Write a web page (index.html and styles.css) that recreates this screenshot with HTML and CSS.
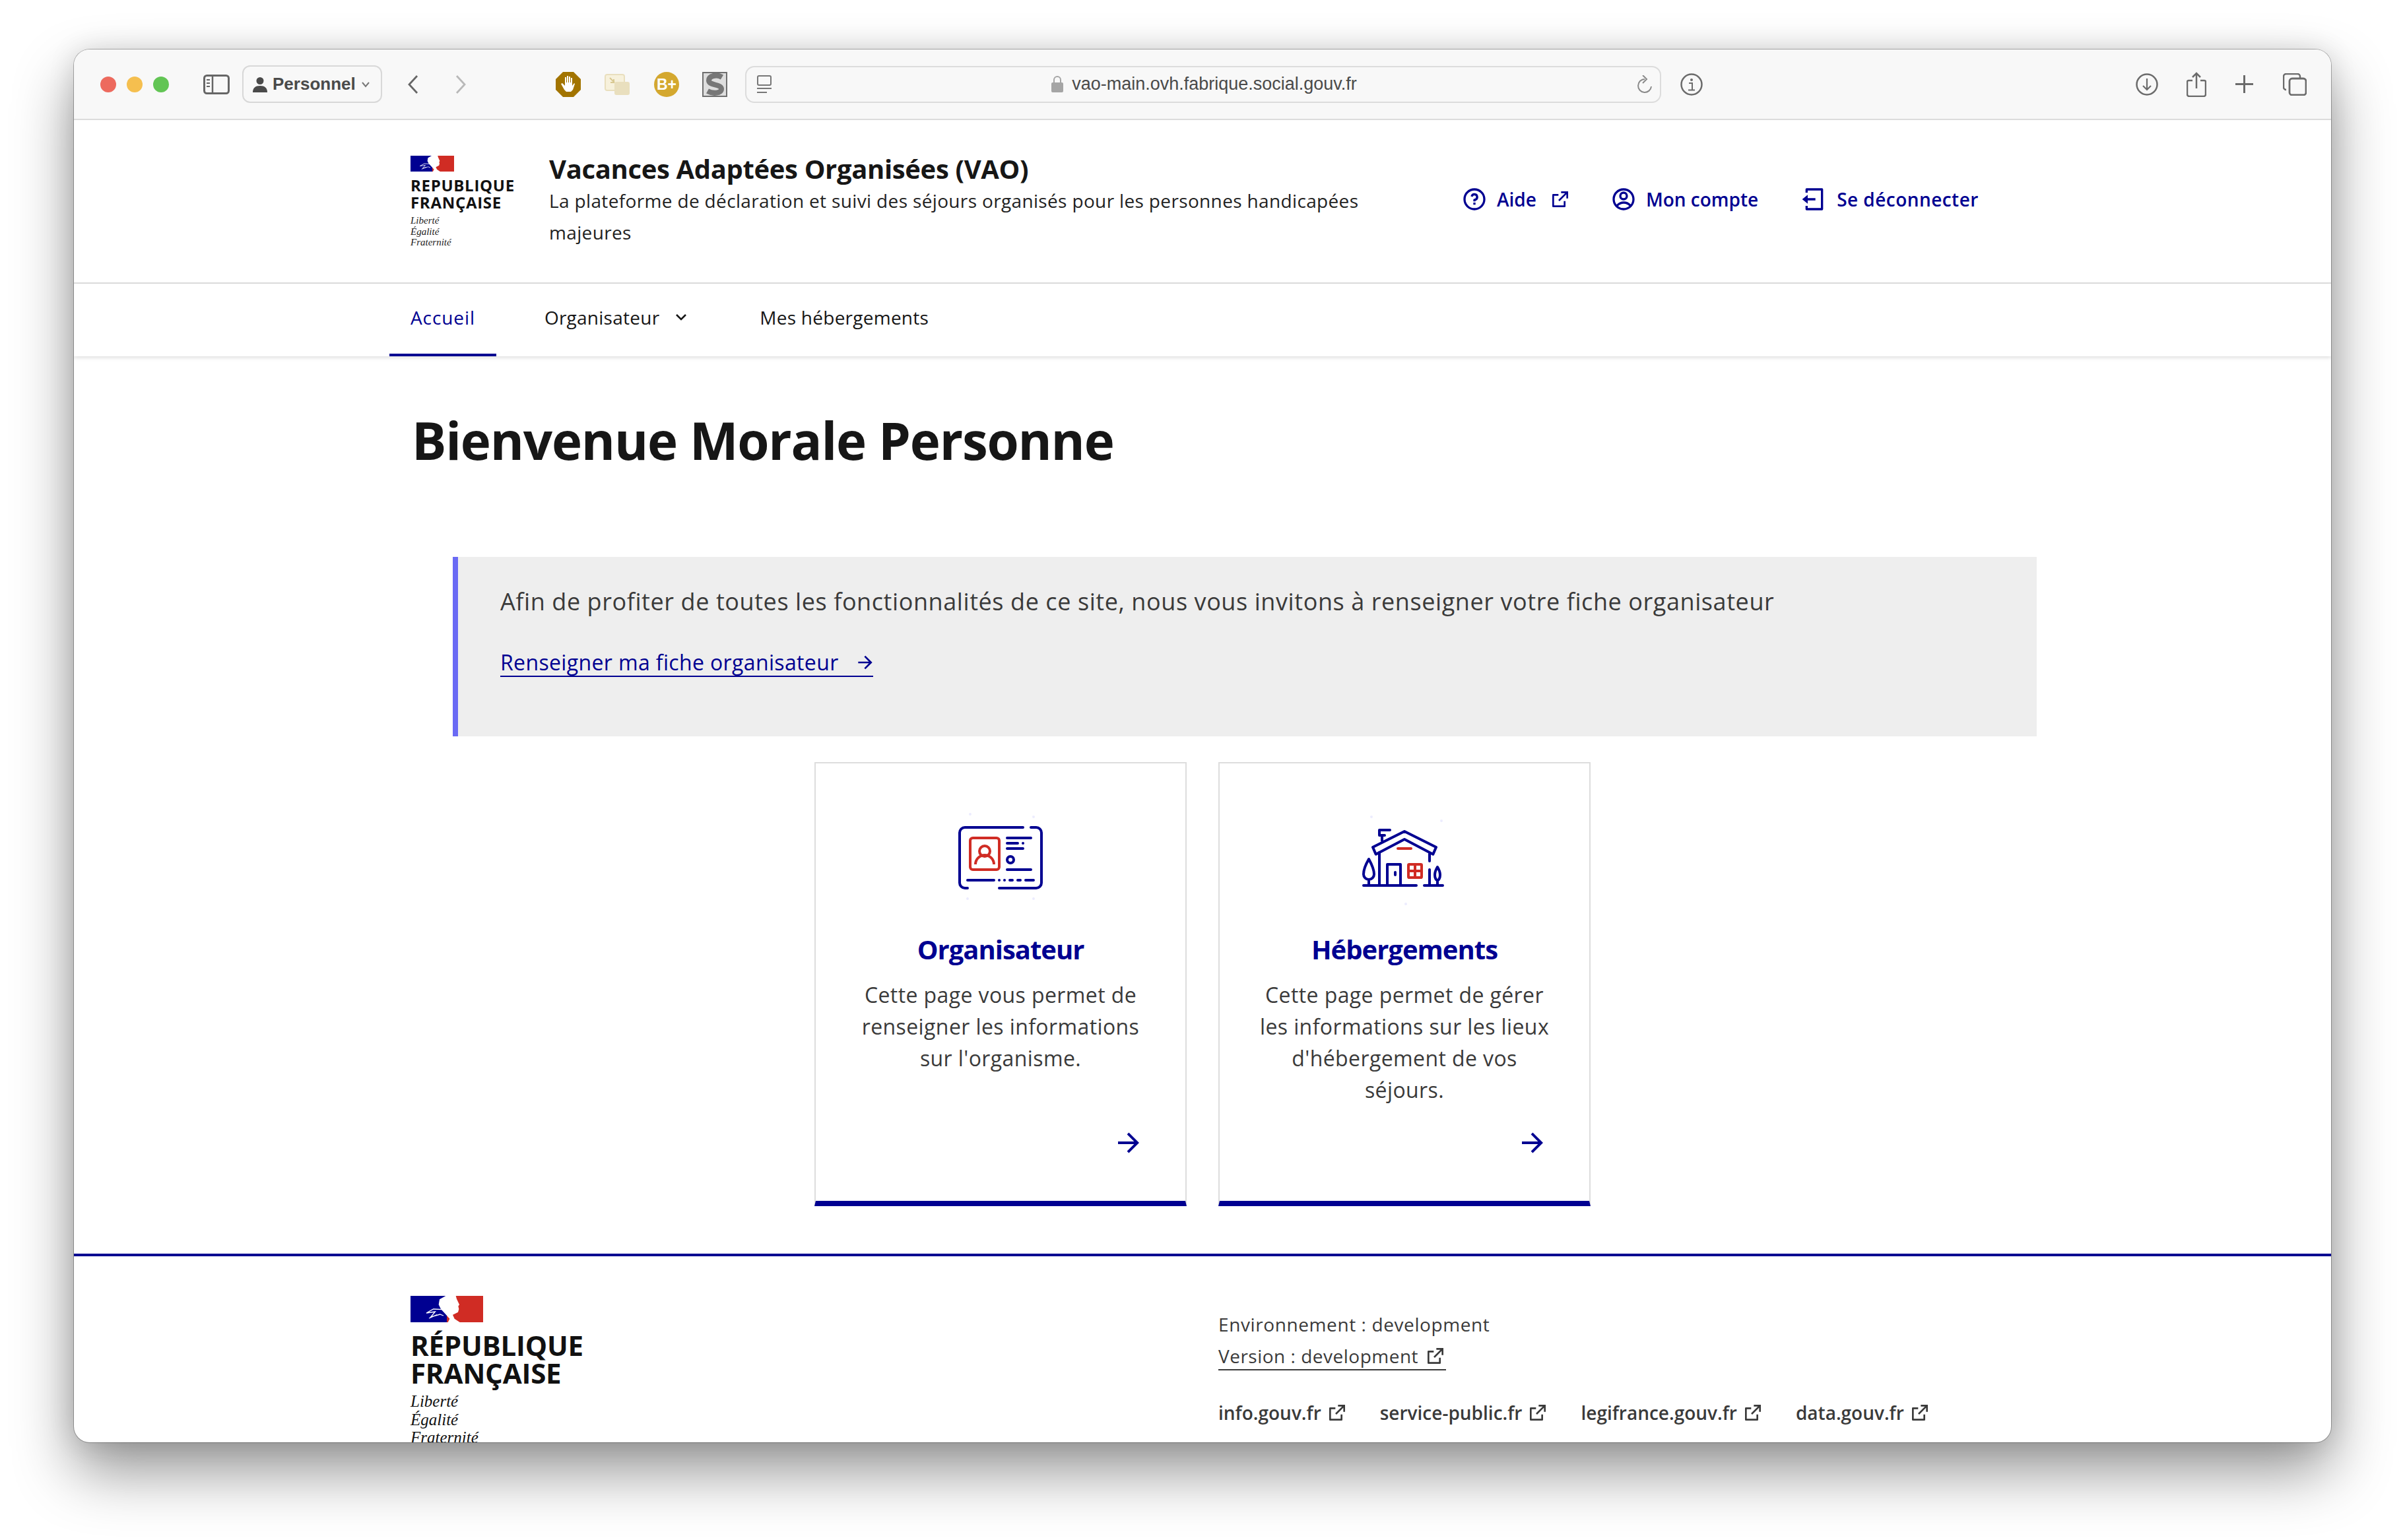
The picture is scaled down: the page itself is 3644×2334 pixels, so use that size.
FILE: index.html
```html
<!DOCTYPE html>
<html lang="fr">
<head>
<meta charset="utf-8">
<title>Vacances Adaptées Organisées (VAO)</title>
<link rel="stylesheet" href="styles.css">
</head>
<body>
<svg class="defs" width="0" height="0" aria-hidden="true">
  <symbol id="ext" viewBox="0 0 24 24"><path d="M10 6v2H5v11h11v-5h2v6a1 1 0 0 1-1 1H4a1 1 0 0 1-1-1V7a1 1 0 0 1 1-1h6zm11-3v8h-2V6.413l-7.793 7.794-1.414-1.414L17.585 5H13V3h8z"/></symbol>
  <symbol id="arrow" viewBox="0 0 24 24"><path d="M16.172 11l-5.364-5.364 1.414-1.414L20 12l-7.778 7.778-1.414-1.414L16.172 13H4v-2z"/></symbol>
  <symbol id="flag" viewBox="0 0 330 120">
    <rect width="330" height="120" fill="#000091"/>
    <rect x="165" width="165" height="120" fill="#d02c24"/>
    <path fill="#fff" d="M160 0H206L210 14 222 40 217 47 220 60 216 74 192 86 200 104 224 120H170L178 104 160 84 138 60 128 40 132 16Z"/>
    <path fill="none" stroke="#fff" stroke-width="4" d="M146 62 104 60 72 78 112 72 92 96 134 84 150 90M120 86 84 102"/>
  </symbol>
</svg>

<div class="window">
  <div class="toolbar">
    <span class="light red"></span><span class="light yellow"></span><span class="light green"></span>
    <svg class="tb sidebar" width="40" height="30" viewBox="0 0 40 30"><rect x="1.5" y="1.5" width="37" height="27" rx="4" fill="none" stroke="#666" stroke-width="3"/><path d="M14 1v28" stroke="#666" stroke-width="2.5"/><path d="M5 8h5M5 13h5M5 18h5" stroke="#666" stroke-width="2"/></svg>
    <div class="profile">
      <svg width="22" height="24" viewBox="0 0 22 24"><circle cx="11" cy="6.500" r="5.500" fill="#4a4a4a"/><path d="M0 24c0-7 4-10 11-10s11 3 11 10z" fill="#4a4a4a"/></svg>
      <span>Personnel</span>
      <svg width="14" height="10" viewBox="0 0 14 10"><path d="M2 2l5 6 5-6" fill="none" stroke="#777" stroke-width="2"/></svg>
    </div>
    <svg class="tb back" width="18" height="30" viewBox="0 0 18 30"><path d="M15 2 3 15l12 13" fill="none" stroke="#666" stroke-width="2.800"/></svg>
    <svg class="tb forward" width="18" height="30" viewBox="0 0 18 30"><path d="M3 2l12 13L3 28" fill="none" stroke="#b9b9b9" stroke-width="2.800"/></svg>
    <svg class="tb ext1" width="38" height="38" viewBox="0 0 38 38"><path d="M11 0h16l11 11v16L27 38H11L0 27V11z" fill="#a27400"/><path d="M13 27 8 18l2-1 4 4V8h2v8h1V6h2v10h1V7h2v9h1V9h2v12l3-4 1 1-3 9-3 3h-7z" fill="#fff"/></svg>
    <svg class="tb ext2" width="38" height="32" viewBox="0 0 38 32"><rect x="1" y="1" width="29" height="24" rx="3" fill="#f7f1dc" stroke="#e9dfbe" stroke-width="2"/><rect x="15" y="12" width="23" height="20" rx="3" fill="#e9dfbe"/><path d="M8 6l7 7M14 8v5H9" fill="none" stroke="#d9c992" stroke-width="2"/></svg>
    <div class="ext3">B+</div>
    <svg class="tb ext4" width="38" height="38" viewBox="0 0 38 38"><rect width="38" height="38" fill="#6f6f6f"/><rect x="2" y="2" width="34" height="34" fill="#dedede"/><path d="M30 8C22 3 10 6 10 13c0 8 19 5 19 13 0 6-12 8-21 3" fill="none" stroke="#777" stroke-width="8"/></svg>
    <div class="urlbar">
      <svg class="reader" width="22" height="28" viewBox="0 0 22 28"><rect x="1" y="1" width="20" height="14" rx="2" fill="none" stroke="#777" stroke-width="2"/><path d="M0 20h22M0 26h15" stroke="#777" stroke-width="2"/></svg>
      <div class="url">
        <svg width="18" height="25" viewBox="0 0 18 25"><rect y="10" width="18" height="15" rx="2" fill="#a5a5a5"/><path d="M4 11V6a5 5 0 0 1 10 0v5" fill="none" stroke="#a5a5a5" stroke-width="2"/></svg>
        <span>vao-main.ovh.fabrique.social.gouv.fr</span>
      </div>
      <svg class="reload" width="23" height="28" viewBox="0 0 23 28"><path d="M12 6a10 10 0 1 0 10 11" fill="none" stroke="#8a8a8a" stroke-width="2"/><path d="M9 0l6 6-6 6" fill="none" stroke="#8a8a8a" stroke-width="2"/></svg>
    </div>
    <svg class="tb info" width="34" height="34" viewBox="0 0 34 34"><circle cx="17" cy="17" r="15.500" fill="none" stroke="#6b6b6b" stroke-width="2.500"/><circle cx="17" cy="10" r="2" fill="#6b6b6b"/><path d="M13 15h5v10M12 25.500h10" fill="none" stroke="#6b6b6b" stroke-width="2"/></svg>
    <svg class="tb download" width="34" height="34" viewBox="0 0 34 34"><circle cx="17" cy="17" r="15.500" fill="none" stroke="#6b6b6b" stroke-width="2.500"/><path d="M17 8v17M11 19l6 6 6-6" fill="none" stroke="#6b6b6b" stroke-width="2.200"/></svg>
    <svg class="tb share" width="30" height="38" viewBox="0 0 30 38"><path d="M9 13H3a2 2 0 0 0-2 2v19a3 3 0 0 0 3 3h22a3 3 0 0 0 3-3V15a2 2 0 0 0-2-2h-6" fill="none" stroke="#6b6b6b" stroke-width="2.500"/><path d="M15 2v23M9 8l6-6 6 6" fill="none" stroke="#6b6b6b" stroke-width="2.500"/></svg>
    <svg class="tb plus" width="27" height="27" viewBox="0 0 27 27"><path d="M13.500 0v27M0 13.500h27" stroke="#6b6b6b" stroke-width="3"/></svg>
    <svg class="tb tabs" width="36" height="34" viewBox="0 0 36 34"><rect x="10" y="8" width="25" height="25" rx="4" fill="none" stroke="#6b6b6b" stroke-width="2.800"/><path d="M5 25a4 4 0 0 1-4-4V5a4 4 0 0 1 4-4h17a4 4 0 0 1 4 4v3" fill="none" stroke="#6b6b6b" stroke-width="2.500"/></svg>
  </div>

  <header class="header">
    <div class="logo">
      <svg class="logo-flag"><use href="#flag"/></svg>
      <div class="logo-name">REPUBLIQUE<br>FRANÇAISE</div>
      <div class="logo-motto">Liberté<br>Égalité<br>Fraternité</div>
    </div>
    <div class="service">
      <div class="service-title">Vacances Adaptées Organisées (VAO)</div>
      <p class="service-sub">La plateforme de déclaration et suivi des séjours organisés pour les personnes handicapées majeures</p>
    </div>
    <nav class="actions">
      <a class="action aide"><svg class="ico40" viewBox="0 0 24 24"><path d="M12 22C6.477 22 2 17.523 2 12S6.477 2 12 2s10 4.477 10 10-4.477 10-10 10zm0-2a8 8 0 1 0 0-16 8 8 0 0 0 0 16zm-1-5h2v2h-2v-2zm2-1.645V14h-2v-1.500a1 1 0 0 1 1-1 1.500 1.500 0 1 0-1.471-1.794l-1.962-.393A3.501 3.501 0 1 1 13 13.355z"/></svg><span>Aide</span><svg class="ico32 ext-after"><use href="#ext"/></svg></a>
      <a class="action compte"><svg class="ico40" viewBox="0 0 24 24"><path d="M12 22C6.477 22 2 17.523 2 12S6.477 2 12 2s10 4.477 10 10-4.477 10-10 10zm-4.987-3.744A7.966 7.966 0 0 0 12 20c1.970 0 3.773-.712 5.167-1.892A6.979 6.979 0 0 0 12.160 16a6.981 6.981 0 0 0-5.147 2.256zM5.616 16.820A8.975 8.975 0 0 1 12.160 14a8.972 8.972 0 0 1 6.362 2.634 8 8 0 1 0-12.906.187zM12 13a4 4 0 1 1 0-8 4 4 0 0 1 0 8zm0-2a2 2 0 1 0 0-4 2 2 0 0 0 0 4z"/></svg><span>Mon compte</span></a>
      <a class="action logout"><svg class="ico40" viewBox="0 0 24 24"><path d="M4 18h2v2h12V4H6v2H4V3a1 1 0 0 1 1-1h14a1 1 0 0 1 1 1v18a1 1 0 0 1-1 1H5a1 1 0 0 1-1-1v-3zm2-7h7v2H6v3l-5-4 5-4v3z"/></svg><span>Se déconnecter</span></a>
    </nav>
  </header>

  <nav class="mainnav">
    <a class="nav-item active">Accueil</a>
    <a class="nav-item orga">Organisateur<svg class="chev" viewBox="0 0 18 12"><path d="M2 2l7 7 7-7" fill="none" stroke="#161616" stroke-width="2.600"/></svg></a>
    <a class="nav-item">Mes hébergements</a>
  </nav>

  <main class="main">
    <h1 class="welcome">Bienvenue Morale Personne</h1>
    <section class="callout">
      <p class="callout-text">Afin de profiter de toutes les fonctionnalités de ce site, nous vous invitons à renseigner votre fiche organisateur</p>
      <a class="callout-link">Renseigner ma fiche organisateur<svg class="ico32 arrow-after"><use href="#arrow"/></svg></a>
    </section>
    <section class="cards">
      <article class="card">
        <svg class="pict" viewBox="-6 0 588 480">
          <g fill="#ececfe"><circle cx="150" cy="42" r="6"/><circle cx="438" cy="54" r="6"/><circle cx="138" cy="426" r="6"/><circle cx="438" cy="426" r="6"/></g>
          <g fill="none" stroke="#000091" stroke-width="12" stroke-linecap="round">
            <path d="M390 102H126a24 24 0 0 0-24 24V354a24 24 0 0 0 24 24H138M426 102H450a24 24 0 0 1 24 24V354a24 24 0 0 1-24 24H282"/>
            <path d="M318 150H426M318 174H366M390 174h.1M318 198H390M318 294H426M138 342H258M282 342h.1M306 342h.1M330 342H342M366 342H378M402 342H438"/>
            <circle cx="333" cy="249" r="15"/>
          </g>
          <g fill="none" stroke="#d02c24" stroke-width="12">
            <rect x="150" y="150" width="132" height="144" rx="12"/>
            <circle cx="216" cy="210" r="24"/>
            <path d="M174 270a42 42 0 0 1 84 0"/>
          </g>
        </svg>
        <h2 class="card-title">Organisateur</h2>
        <p class="card-desc">Cette page vous permet de renseigner les informations sur l'organisme.</p>
        <svg class="card-arrow"><use href="#arrow"/></svg>
      </article>
      <article class="card">
        <svg class="pict" viewBox="0 0 588 480">
          <g fill="#ececfe"><circle cx="144" cy="54" r="6"/><circle cx="462" cy="72" r="6"/><circle cx="300" cy="450" r="6"/></g>
          <g fill="none" stroke="#000091" stroke-width="12" stroke-linecap="round" stroke-linejoin="round">
            <path d="M228 114H180V138H204M192 138V162"/>
            <path d="M294 120 438 192 424 224 294 156 164 224 150 192Z"/>
            <path d="M180 216V366M408 222V255M408 294V366M216 366V270H276V366M252 306V318M108 366H348M384 366H468"/>
            <path d="M132 246C115 275 108 300 108 315a24 24 0 0 0 48 0C156 300 148 275 132 246ZM132 342V366"/>
            <path d="M444 282C436 295 432 305 432 318 432 332 438 342 444 342 450 342 456 332 456 318 456 305 452 295 444 282ZM444 342V366"/>
          </g>
          <g fill="none" stroke="#d02c24" stroke-width="12" stroke-linecap="round">
            <path d="M264 198H324"/>
            <rect x="312" y="270" width="60" height="60" rx="4"/>
            <path d="M342 270V330M312 300H372"/>
          </g>
        </svg>
        <h2 class="card-title">Hébergements</h2>
        <p class="card-desc">Cette page permet de gérer les informations sur les lieux d'hébergement de vos séjours.</p>
        <svg class="card-arrow"><use href="#arrow"/></svg>
      </article>
    </section>
  </main>

  <footer class="footer">
    <div class="foot-brand">
      <svg class="foot-flag"><use href="#flag"/></svg>
      <div class="foot-name">RÉPUBLIQUE<br>FRANÇAISE</div>
      <div class="foot-motto">Liberté<br>Égalité<br>Fraternité</div>
    </div>
    <div class="foot-info">
      <p class="foot-line">Environnement : development</p>
      <a class="foot-version">Version : development<svg class="ico32 ext-foot"><use href="#ext"/></svg></a>
      <ul class="foot-links">
        <li><a>info.gouv.fr<svg class="ico32 ext-foot"><use href="#ext"/></svg></a></li>
        <li><a>service-public.fr<svg class="ico32 ext-foot"><use href="#ext"/></svg></a></li>
        <li><a>legifrance.gouv.fr<svg class="ico32 ext-foot"><use href="#ext"/></svg></a></li>
        <li><a>data.gouv.fr<svg class="ico32 ext-foot"><use href="#ext"/></svg></a></li>
      </ul>
    </div>
  </footer>
</div>
</body>
</html>
```

FILE: styles.css
```css
* { box-sizing: border-box; }
html, body { margin: 0; padding: 0; }
body {
  width: 3644px;
  height: 2334px;
  padding: 75px 112px 0;
  background: #fff;
  font-family: "Open Sans", "Noto Sans", sans-serif;
  color: #161616;
  overflow: hidden;
}
.defs { position: absolute; }
p, h1, h2, ul { margin: 0; padding: 0; }
ul { list-style: none; }

.window {
  width: 3420px;
  height: 2111px;
  background: #fff;
  border-radius: 24px;
  overflow: hidden;
  box-shadow: 0 0 0 1px rgba(0,0,0,.28), 0 44px 90px rgba(0,0,0,.42), 0 0 40px rgba(0,0,0,.12);
  display: flex;
  flex-direction: column;
}

/* browser toolbar */
.toolbar {
  flex: none;
  height: 107px;
  background: #f8f8f8;
  border-bottom: 2px solid #dcdcdc;
  display: flex;
  align-items: center;
  padding-left: 40px;
}
.tb { flex: none; display: block; }
.light { width: 24px; height: 24px; border-radius: 50%; flex: none; margin-right: 16px; }
.red { background: #ed6a5e; }
.yellow { background: #f5bf4f; }
.green { background: #62c554; margin-right: 0; }
.sidebar { margin-left: 52px; }
.profile {
  flex: none;
  margin-left: 19px;
  width: 212px;
  height: 57px;
  border: 2px solid #d8d8d8;
  border-radius: 12px;
  display: flex;
  align-items: center;
  gap: 8px;
  padding-left: 14px;
  font: 700 26px "Liberation Sans", sans-serif;
  color: #4a4a4a;
}
.back { margin-left: 38px; }
.forward { margin-left: 54px; }
.ext1 { margin-left: 135px; }
.ext2 { margin-left: 36px; }
.ext3 {
  flex: none;
  margin-left: 37px;
  width: 38px;
  height: 38px;
  border-radius: 50%;
  background: #d4a82f;
  color: #fff;
  font: 700 23px/38px "Liberation Sans", sans-serif;
  text-align: center;
}
.ext4 { margin-left: 35px; }
.urlbar {
  flex: none;
  margin-left: 27px;
  width: 1388px;
  height: 56px;
  border: 2px solid #dcdcdc;
  border-radius: 14px;
  display: flex;
  align-items: center;
  padding: 0 12px 0 16px;
}
.reader { flex: none; }
.url {
  flex: 1;
  display: flex;
  align-items: center;
  justify-content: center;
  gap: 13px;
  font: 400 27px "Liberation Sans", sans-serif;
  color: #4a4a4a;
}
.reload { flex: none; }
.info { margin-left: 29px; }
.download { margin-left: 656px; }
.share { margin-left: 43px; }
.plus { margin-left: 44px; }
.tabs { margin-left: 45px; }

/* site header */
.header {
  flex: none;
  height: 248px;
  border-bottom: 2px solid #e0e0e0;
  display: flex;
  padding-left: 510px;
}
.logo { flex: none; width: 210px; padding-top: 54px; }
.logo-flag { display: block; width: 66px; height: 24px; }
.logo-name {
  margin-top: 8px;
  font-size: 24px;
  font-weight: 700;
  line-height: 26px;
  letter-spacing: .7px;
  color: #111;
}
.logo-motto {
  margin-top: 6px;
  font: italic 400 15px/16.500px "Liberation Serif", serif;
  color: #222;
}
.service { flex: none; width: 1382px; padding-top: 50px; }
.service-title { font-size: 40px; font-weight: 700; line-height: 48px; letter-spacing: -.35px; }
.service-sub { width: 1280px; font-size: 28px; line-height: 48px; color: #222; letter-spacing: .35px; }
.actions {
  flex: none;
  display: flex;
  align-items: center;
  padding-bottom: 6px;
  color: #000091;
  font-size: 28px;
  font-weight: 600;
}
.action { display: flex; align-items: center; fill: #000091; }
.ico40 { width: 40px; height: 40px; flex: none; display: block; }
.ico32 { width: 32px; height: 32px; flex: none; display: inline-block; }
.action span { margin-left: 14px; }
.aide { margin-right: 60px; }
.compte { margin-right: 65px; }
.logout span { letter-spacing: .45px; }
.ext-after { margin-left: 20px; }

/* main nav */
.mainnav {
  flex: none;
  position: relative;
  height: 110px;
  padding-left: 478px;
  display: flex;
  font-size: 28px;
  letter-spacing: .25px;
  box-shadow: 0 2px 6px rgba(0,0,0,.14);
}
.nav-item {
  padding: 0 32px;
  margin-right: 41px;
  display: flex;
  align-items: center;
  padding-bottom: 4px;
  border-bottom: 4px solid transparent;
}
.active { color: #000091; border-bottom-color: #000091; letter-spacing: .9px; }
.orga { margin-right: 46px; }
.chev { width: 18px; height: 12px; margin-left: 24px; }

/* page */
.main { flex: none; }
.welcome {
  margin: 79px 0 129px 512px;
  font-size: 78px;
  font-weight: 700;
  line-height: 96px;
  letter-spacing: -1.2px;
}
.callout {
  margin-left: 574px;
  width: 2400px;
  height: 272px;
  background: #eee;
  border-left: 8px solid #6a6af4;
  padding: 44px 0 0 64px;
  color: #3a3a3a;
}
.callout-text { font-size: 36px; line-height: 48px; letter-spacing: .58px; }
.callout-link {
  display: inline-flex;
  align-items: center;
  margin-top: 48px;
  color: #000091;
  fill: #000091;
  font-size: 32px;
  line-height: 40px;
  letter-spacing: .36px;
  border-bottom: 2px solid #000091;
}
.arrow-after { margin-left: 24px; margin-right: -4px; }

.cards {
  display: flex;
  justify-content: center;
  gap: 48px;
  margin-top: 39px;
}
.card {
  width: 564px;
  height: 673px;
  border: 2px solid #ddd;
  border-bottom: 8px solid #000091;
  display: flex;
  flex-direction: column;
  align-items: center;
  padding: 63px 55px 64px;
  text-align: center;
  fill: #000091;
}
.pict { flex: none; width: 196px; height: 160px; display: block; }
.card-title {
  margin-top: 35px;
  font-size: 40px;
  font-weight: 700;
  line-height: 48px;
  letter-spacing: -1px;
  color: #000091;
}
.card-desc {
  margin-top: 21px;
  font-size: 32px;
  line-height: 48px;
  letter-spacing: .4px;
  color: #3a3a3a;
}
.card-arrow {
  flex: none;
  width: 48px;
  height: 48px;
  margin-top: auto;
  align-self: flex-end;
  margin-right: 7px;
}

/* footer */
.footer {
  flex: none;
  margin-top: 72px;
  border-top: 4px solid #000091;
  display: flex;
  padding-left: 510px;
}
.foot-brand { flex: none; width: 1224px; padding-top: 60px; }
.foot-flag { display: block; width: 110px; height: 40px; }
.foot-name {
  margin-top: 14px;
  font-size: 42px;
  font-weight: 700;
  line-height: 42px;
  letter-spacing: -.2px;
  color: #111;
}
.foot-motto {
  margin-top: 8px;
  font: italic 400 25px/27.500px "Liberation Serif", serif;
  color: #111;
}
.foot-info { padding-top: 79px; font-size: 28px; color: #3a3a3a; fill: #3a3a3a; }
.foot-line { line-height: 48px; letter-spacing: .6px; }
.foot-version {
  display: inline-flex;
  align-items: center;
  line-height: 40px;
  margin-top: 4px;
  letter-spacing: .5px;
  border-bottom: 2px solid #3a3a3a;
}
.ext-foot { margin-left: 8px; }
.foot-version .ext-foot { margin-left: 10px; }
.foot-links { display: flex; gap: 49px; margin-top: 44px; font-weight: 600; }
.foot-links a { display: flex; align-items: center; line-height: 40px; }
```
